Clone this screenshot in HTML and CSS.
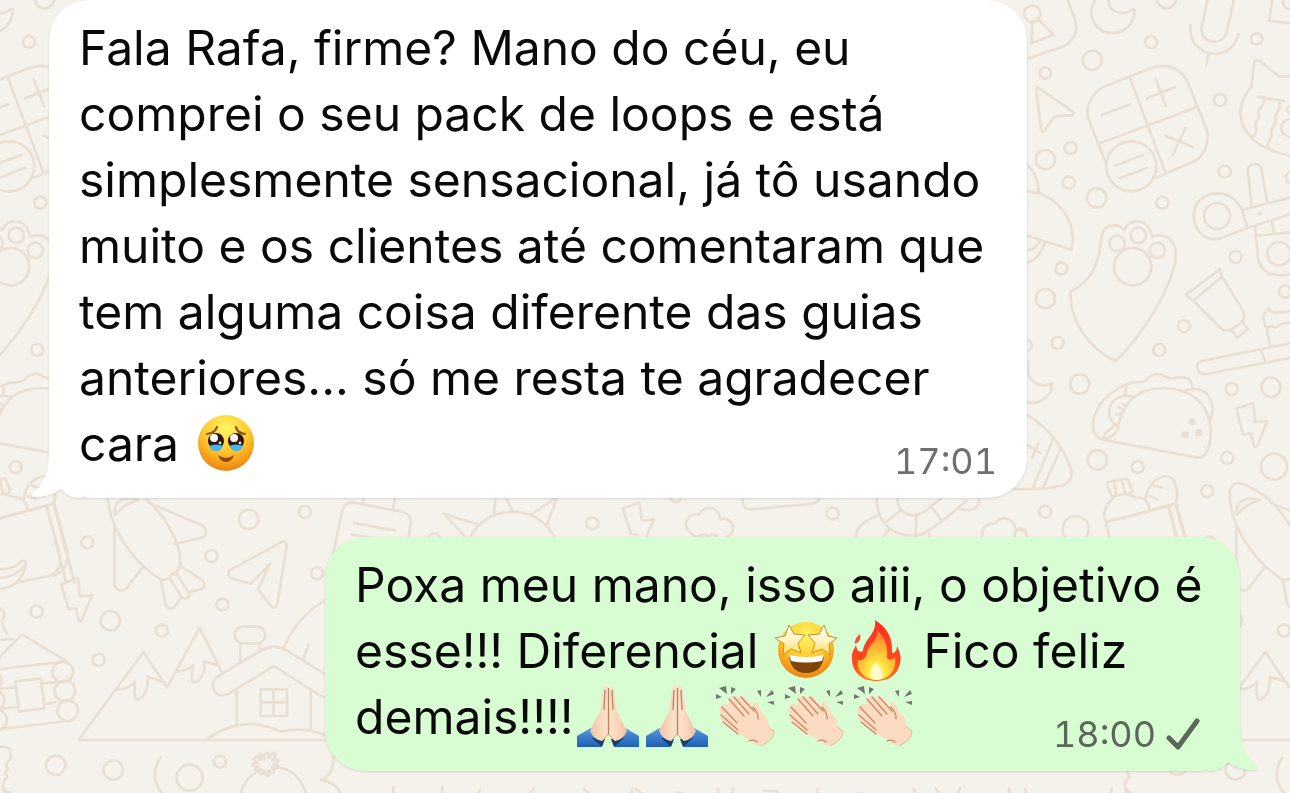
FILE: index.html
```html
<!DOCTYPE html>
<html lang="pt-BR">
<head>
    <meta charset="UTF-8">
    <meta name="viewport" content="width=device-width, initial-scale=1.0">
    <title>Conversa</title>
    <link rel="stylesheet" href="styles.css">
</head>
<body>

<!-- wallpaper doodles, the tile repeats every 1122px -->
<svg class="wallpaper" aria-hidden="true">
    <defs>
        <g id="tile">
            <g transform="translate(1020 0) scale(.33333)">
                <circle cx="37" cy="41" r="25"/>
                <path d="M38 65L34 130L101 104L53 56M143 0L166 60Q178 112 134 138L10 180"/>
                <path d="M225 0C195 50 230 99 277 99C315 99 344 70 344 30Q344 25 335 30C305 50 262 35 266 0"/>
                <circle cx="440" cy="-4" r="29"/><circle cx="393" cy="126" r="18"/><circle cx="217" cy="181" r="29"/><circle cx="76" cy="219" r="17"/>
                <path d="M562 0L545 83C540 135 610 140 620 95L639 15V0M511 75C503 175 635 195 655 102M566 163L559 194"/>
                <circle cx="710" cy="117" r="17"/><circle cx="600" cy="300" r="18"/>
                <path d="M757 0L747 62L830 73M790 0Q790 30 810 25"/>
                <path d="M49 268Q49 260 58 265L162 338Q162 346 150 346L103 350L73 393Q64 400 63 388Z"/>
                <path d="M258 491L207 360C193 320 218 276 252 260L388 206C440 185 485 205 504 250L557 380C575 430 550 475 510 490L400 536M330 234L437 520M240 430L530 322M246 345L330 313M381 295L465 262M407 237L438 319M437 407L519 442M496 384L459 465"/>
                <circle cx="334" cy="499" r="75"/><path d="M285 497L369 465M299 535L382 503"/>
                <path d="M695 260L702 190Q706 176 720 183L778 230H850M695 260C650 310 650 365 695 415Q740 458 830 470M713 290L792 303M730 297C740 320 705 325 716 345C723 360 700 365 708 380C714 398 697 410 697 410M778 307C788 330 757 340 767 360C772 378 748 380 755 400C760 415 736 425 745 443"/>
                <circle cx="810" cy="384" r="26"/><circle cx="816" cy="330" r="14"/>
                <circle cx="76" cy="479" r="29"/><circle cx="152" cy="444" r="18"/><circle cx="146" cy="548" r="18"/><circle cx="230" cy="594" r="29"/><circle cx="427" cy="608" r="18"/><circle cx="614" cy="515" r="18"/><circle cx="124" cy="806" r="18"/><circle cx="647" cy="771" r="18"/><circle cx="816" cy="533" r="18"/>
                <path d="M0 480Q55 510 56 576M0 574C95 565 178 655 154 749L0 700M0 750Q40 760 62 720M0 795Q60 785 74 725"/>
                <circle cx="591" cy="648" r="39"/><path d="M682 684L610 712C560 732 521 690 521 648C521 600 560 580 592 580C625 580 652 600 666 630L682 684M666 630L830 588M682 684L830 637M695 617L684 515C682 485 720 485 724 508L742 605M705 680L714 770Q720 805 750 825M755 660L762 696M706 708L830 695"/>
                <circle cx="719" cy="641" r="2"/><circle cx="777" cy="761" r="35"/>
                <path d="M220 810C250 750 237 720 250 695C260 671 300 670 313 691C325 655 385 648 396 710C445 695 475 730 466 785C450 860 390 980 287 1084C200 1040 150 960 151 876C190 855 210 830 220 810"/>
                <circle cx="291" cy="730" r="23"/><circle cx="355" cy="706" r="23"/><circle cx="412" cy="751" r="23"/><circle cx="338" cy="800" r="56"/>
            </g>
            <g transform="translate(1020 260) scale(.33333)">
                <circle cx="76" cy="116" r="29"/><circle cx="113" cy="249" r="18"/><circle cx="18" cy="256" r="17"/><circle cx="179" cy="372" r="29"/><circle cx="418" cy="270" r="18"/><circle cx="492" cy="198" r="18"/>
                <circle cx="635" cy="387" r="18"/><circle cx="753" cy="382" r="29"/><circle cx="795" cy="95" r="18"/><circle cx="622" cy="594" r="18"/><circle cx="762" cy="620" r="39"/><circle cx="562" cy="693" r="18"/><circle cx="353" cy="621" r="18"/><circle cx="232" cy="600" r="29"/><circle cx="76" cy="755" r="18"/><circle cx="167" cy="807" r="39"/><circle cx="2" cy="824" r="18"/>
                <path d="M714 0C725 45 780 55 820 38"/>
                <path d="M498 104L599 28L606 50L519 122ZM606 50L668 150Q677 168 668 185L633 210Q613 215 602 204L519 122M633 210L652 233L684 207L665 185"/>
                <path d="M750 258L740 204C725 180 730 158 747 144Q750 160 770 158L820 152M740 204Q752 195 765 203L785 192L820 186M820 248L545 303C522 310 528 345 560 342L820 292M723 270L734 300"/>
                <path d="M26 302C10 350 50 390 96 370C98 410 55 435 20 427"/>
                <path d="M0 454C60 480 130 550 154 630Q160 670 120 678Q65 690 -20 687M100 535L39 683M122 567L70 681M15 550L62 580M55 550L37 592"/>
                <path d="M247 539C210 525 215 480 230 453C250 410 290 385 330 370C350 365 365 370 380 360C390 343 420 335 436 350C455 360 458 355 470 353C510 345 515 365 519 387C570 385 590 440 569 485C575 520 572 550 562 572Q550 598 530 592L247 539Q277 535 292 510C305 430 350 385 430 384C510 384 560 430 569 485M493 392L519 387M319 378L315 405M344 411C310 400 275 410 268 450Q265 480 287 494L254 521L249 538M287 494L297 501M295 441L303 446M308 431L318 438M289 462L305 464"/>
                <g fill="#eadfd3"><circle cx="516" cy="485" r="7"/><circle cx="536" cy="518" r="7"/><circle cx="496" cy="524" r="7"/></g>
                <path d="M649 446L699 429L706 486L742 483L713 555Q706 566 702 556L692 520L670 525Z"/>
                <path d="M275 709L262 676Q260 664 275 664L322 656L337 690Q335 700 321 702L275 709M283 664L288 705M306 660L315 701M283 711C245 745 250 770 258 786C272 850 300 1000 300 1000M321 702C340 714 370 710 378 722Q388 735 388 749M258 786L467 732M378 715C380 680 410 650 438 648C470 650 477 700 467 732L530 970M402 678L425 682M390 709L413 717M446 740L505 970"/>
            </g>
            <g transform="translate(0 490) scale(.33333)">
                <path d="M140 50L178 190Q190 245 145 258L55 277M163 40L202 185Q208 240 160 257M0 237Q35 240 60 218Q76 205 77 222C70 265 45 293 0 297M0 264Q45 262 70 230M0 86L163 40"/>
                <circle cx="262" cy="157" r="18"/><circle cx="110" cy="365" r="18"/><circle cx="331" cy="392" r="29"/><circle cx="486" cy="422" r="18"/><circle cx="296" cy="510" r="18"/><circle cx="634" cy="198" r="18"/><circle cx="667" cy="344" r="18"/><circle cx="746" cy="88" r="29"/><circle cx="914" cy="66" r="18"/><circle cx="951" cy="250" r="18"/>
                <circle cx="167" cy="826" r="29"/><circle cx="340" cy="840" r="29"/><circle cx="569" cy="863" r="39"/><circle cx="660" cy="815" r="18"/>
                <path d="M183 282L234 264L240 319L277 316L244 392Q240 400 236 392L228 355L206 357Z"/>
                <path d="M483 270C390 210 320 100 323 5C330 -35 365 -20 400 0C480 45 550 160 540 230L525 255M483 270L510 266M345 75C340 40 360 15 415 30C390 38 370 45 345 75M343 103V285Q355 310 378 297L427 233M445 38L605 105C625 120 620 140 602 144L525 162M483 270L495 340Q505 365 523 350L545 323M543 230L600 265C620 280 615 293 602 298L568 305M510 266L544 320Q560 333 570 315L530 250Q510 247 510 266"/>
                <path d="M690 240L843 157Q860 150 860 168L832 342Q824 360 812 348L774 298L810 222L752 281L690 263Q680 252 690 240Z"/>
                <path d="M0 500L66 433L200 514L0 537M0 450L38 447M0 355Q20 370 10 385Q0 395 20 430M0 597L45 592M130 580L166 577M0 656L54 651M135 642L168 637M0 717L205 693M45 575L123 565L134 655L58 664Z"/>
                <circle cx="188" cy="545" r="31"/><circle cx="195" cy="603" r="31"/><circle cx="203" cy="662" r="31"/><circle cx="-26" cy="572" r="31"/><circle cx="-18" cy="631" r="31"/><circle cx="-10" cy="690" r="31"/>
                <path d="M236 750L430 486L501 592L599 413L667 550M350 598Q385 600 405 575C403 605 403 630 414 629C433 625 447 590 443 560L495 577M530 543Q560 545 580 525C573 565 574 580 585 578C605 570 617 540 613 514L650 525M236 750H1000"/>
                <rect x="704" y="410" width="92" height="50" rx="25"/><path d="M721 460V518M780 460V481M660 555L780 483Q822 459 860 481L1000 568M710 597V702M932 597V717M1000 624Q965 625 950 610L822 528L684 612C640 630 620 575 660 555M617 750C695 694 770 690 840 725Q920 708 985 740M852 472Q890 380 980 328M926 463L909 510"/>
                <path d="M782 598H861V678H782ZM821 598V678M782 637H861"/>
                <path d="M0 770Q33 770 31 785Q32 795 31 808Q10 820 24 835Q10 845 22 860Q5 875 10 900L30 909M482 802Q445 855 485 909M722 909Q735 865 765 850M835 832Q895 840 918 909M1000 800Q1000 860 963 869Q1010 880 1020 909"/>
                <path d="M792 808C786 784 771 790 781 809C764 793 753 807 773 819C751 818 753 834 774 829C758 841 768 852 782 836C777 858 788 858 793 840C798 866 809 864 806 840C820 858 829 848 816 833C840 839 842 825 820 823C842 815 836 801 817 811C835 790 822 777 808 804C805 783 793 783 792 808Z"/>
            </g>
            <g transform="translate(330 480) scale(.33333)">
                <path d="M10 220L37 90Q45 65 70 68L220 96Q244 105 243 130L233 180M98 70L102 45M190 90L196 45M72 129L195 152M65 163L180 185M405 170L341 101L448 135M422 170C470 75 615 65 673 170M492 105L497 45M550 95L520 40M602 105L682 50L650 137"/>
                <circle cx="787" cy="130" r="18"/><circle cx="313" cy="178" r="18"/><circle cx="1037" cy="48" r="18"/>
                <path d="M878 85L928 68L936 122L972 119L945 180M878 85L903 160L924 165M1095 168C1055 150 1060 100 1107 103C1120 75 1165 75 1171 117C1215 110 1220 165 1190 168M1100 170Q1120 160 1137 168Q1152 158 1163 170M1238 55Q1235 90 1265 88L1440 72Q1460 70 1468 55"/>
            </g>
            <g transform="translate(800 480) scale(.33333)">
                <circle cx="98" cy="100" r="18"/><circle cx="735" cy="95" r="18"/>
                <path d="M230 50C230 135 285 175 360 165Q400 150 500 62M292 50C290 110 350 120 385 85L430 50M260 125L304 90M350 106L346 168M240 103Q165 135 168 170M270 145L250 170M392 78L426 122M470 86L510 91Q545 80 535 50M388 160V175M546 170C545 130 575 130 586 130C600 105 645 112 646 149Q680 148 682 170"/>
            </g>
            <g transform="translate(320 750) scale(.6122)" stroke-width="4.2">
                <path d="M120 60Q120 100 125 135M200 60Q200 105 210 135M163 108L165 135M262 65L240 108H315M350 63Q320 95 305 135M430 63Q465 90 480 135M510 63Q500 105 520 114Q550 115 560 135M515 63L561 101Q575 95 577 75Q585 65 597 75M650 63L651 100Q660 115 670 95L675 63M725 67H747L745 135M731 75C700 75 700 105 732 105V135M813 63L814 82Q775 82 783 120L781 135M836 135C840 50 920 50 923 135M850 135C855 75 905 75 910 135M970 63L975 82Q950 96 968 105L978 135M1005 63L1031 92L1045 63M1125 63L1135 125L1147 115L1150 135M1152 63L1155 78L1172 76L1160 105L1172 110L1167 135M1198 135Q1200 105 1217 105Q1230 108 1235 122Q1245 110 1288 108L1293 63M1318 63L1316 85L1322 96L1315 116L1330 128"/>
                <ellipse cx="1090" cy="112" rx="9" ry="11"/><ellipse cx="605" cy="127" rx="6" ry="5"/>
            </g>
        </g>
    </defs>
    <use href="#tile"/>
    <use href="#tile" x="-1122"/>
    <use href="#tile" x="1122"/>
</svg>

<!-- emoji drawings -->
<svg class="sprites" aria-hidden="true">
    <defs>
        <radialGradient id="skinYellow" cx=".5" cy=".25" r=".75">
            <stop offset="0" stop-color="#fff766"/><stop offset=".55" stop-color="#ffc72e"/><stop offset="1" stop-color="#ec8210"/>
        </radialGradient>
        <linearGradient id="starFill" x1="0" y1="0" x2="0" y2="1">
            <stop offset="0" stop-color="#fff"/><stop offset=".5" stop-color="#fff7c8"/><stop offset="1" stop-color="#ffd84c"/>
        </linearGradient>
        <linearGradient id="flameFill" x1="0" y1="0" x2="0" y2="1">
            <stop offset="0" stop-color="#ff3024"/><stop offset=".7" stop-color="#ff4a1e"/><stop offset="1" stop-color="#ff7a1b"/>
        </linearGradient>
        <radialGradient id="flameCore" cx=".5" cy=".88" r=".8">
            <stop offset="0" stop-color="#fffbd8"/><stop offset=".3" stop-color="#ffe640"/><stop offset=".8" stop-color="#ffa02d"/><stop offset="1" stop-color="#ff7b35"/>
        </radialGradient>
        <linearGradient id="sleeve" x1="0" y1="0" x2="0" y2="1">
            <stop offset="0" stop-color="#5599dd"/><stop offset="1" stop-color="#1f5fb4"/>
        </linearGradient>
        <linearGradient id="skin" x1="0" y1="0" x2="1" y2="0">
            <stop offset="0" stop-color="#f0c3a2"/><stop offset=".4" stop-color="#fde0c8"/><stop offset=".6" stop-color="#fde0c8"/><stop offset="1" stop-color="#f0c3a2"/>
        </linearGradient>
        <symbol id="tearful" viewBox="0 0 69 62">
            <circle cx="34" cy="31" r="28" fill="url(#skinYellow)"/>
            <path d="M15 22Q23 21 25 15M53 22Q45 21 44 15" fill="none" stroke="#89530f" stroke-width="2.2" stroke-linecap="round"/>
            <circle cx="24" cy="29" r="8" fill="#2b1710"/><circle cx="44" cy="29" r="8" fill="#2b1710"/>
            <path d="M17 34Q24 31 31 34Q28 40 24 39Q19 39 17 34ZM37 34Q44 31 51 34Q49 39 44 39Q40 39 37 34Z" fill="#43b8ee"/>
            <circle cx="22" cy="26" r="4" fill="#fff"/><circle cx="42" cy="26" r="4" fill="#fff"/><circle cx="28" cy="31" r="1.4" fill="#ddd"/><circle cx="48" cy="31" r="1.4" fill="#ddd"/>
            <path d="M26 43Q34 49 42 43Q40 50 34 50Q28 50 26 43Z" fill="#8b4a0b"/>
        </symbol>
        <symbol id="starstruck" viewBox="0 0 69 62">
            <circle cx="34" cy="31" r="28" fill="url(#skinYellow)"/>
            <path d="M17 37Q34 41 52 37Q50 54 34 54Q19 54 17 37Z" fill="#7c4509"/>
            <path d="M17 36Q34 40 52 36L50 42Q34 45 19 42Z" fill="#fff"/>
            <g fill="url(#starFill)" stroke="#c69122" stroke-width="1" stroke-linejoin="round">
                <path d="M17 6L22 15L33 16L26 24L29 34L19 30L11 36L12 25L3 19L13 17Z"/>
                <path d="M52 6L47 15L36 16L43 24L40 34L50 30L58 36L57 25L65 19L56 17Z"/>
            </g>
        </symbol>
        <symbol id="flame" viewBox="0 0 69 62">
            <path d="M34 1C47 9 52 20 51 34C55 34 56 30 56 27C61 37 60 42 58 48C54 58 46 62 35 62C21 62 11 53 11 40C10 33 14 29 15 26C16 32 18 34 22 32C23 20 36 15 34 1Z" fill="url(#flameFill)"/>
            <path d="M19 15Q21 22 14 25Q13 20 19 15Z" fill="#ff4b32"/>
            <path d="M36 11C45 20 47 28 46 39C50 42 52 40 54 38C56 49 50 60 36 61C23 61 15 51 17 41C21 42 25 40 26 34C27 25 37 24 36 11Z" fill="url(#flameCore)"/>
            <path d="M35 43C44 52 43 61 36 61C28 61 27 52 35 43Z" fill="#fffbd2" opacity=".8"/>
        </symbol>
        <symbol id="pray" viewBox="0 0 69 62">
            <path d="M3 51L17 43L30 55L27 62H3ZM65 51L51 43L38 55L41 62H65Z" fill="url(#sleeve)"/>
            <path d="M18 53L28 62L31 54M50 53L40 62L37 54" fill="#163c70"/>
            <path d="M34 2Q31 -1 29 4L26 27Q20 37 16 46Q20 55 28 56L34 49L41 56Q49 55 53 46Q48 37 43 27L40 4Q38 -1 34 2Z" fill="url(#skin)"/>
            <path d="M34.500 3V49M31 5L30 25M38 5L39 25" fill="none" stroke="#b9835e" stroke-width="1.300"/>
            <path d="M28 56L34 49L41 56" fill="none" stroke="#d9a17b"/>
        </symbol>
        <symbol id="clap" viewBox="0 0 69 62">
            <g fill="#737671"><path d="M7 3L14 1L15 9ZM19 2L24 4L19 9ZM4 9L10 12L4 14ZM45 6L49 5L49 12ZM54 12L60 5L62 9ZM55 17L62 16V20Z"/></g>
            <path d="M9 21Q12 17 16 20L18 13Q22 9 26 13Q29 9 33 13L41 22Q40 14 45 18Q47 22 50 28C55 33 57 36 56 41L62 46Q62 55 49 61Q42 60 39 56L25 48Q17 44 12 37Q7 34 9 30Q6 26 9 21Z" fill="#fbdcc3"/>
            <path d="M17 14L32 31M22 12L37 29M29 12L42 26M10 22L25 38M9 30L26 45M11 37L26 49M41 22Q47 29 46 34M37 56Q42 54 45 57" fill="none" stroke="#c98a66" stroke-width="1.300" stroke-linecap="round"/>
            <path d="M56 41Q58 44 62 46Q62 55 49 61" fill="none" stroke="#e8b797"/>
        </symbol>
    </defs>
</svg>

<main class="chat">
    <article class="message received">
        <svg class="tail" viewBox="0 0 50 54" aria-hidden="true"><path d="M18 0C18 25 16 36 2 49Q-1 53 4 53Q20 53 30 45Q37 54 50 54V0Z"/></svg>
        <div class="text">Fala Rafa, firme? Mano do céu, eu comprei o seu pack de loops e está simplesmente sensacional, já tô usando muito e os clientes até comentaram que tem alguma coisa diferente das guias anteriores... só me resta te agradecer cara <svg class="emoji" role="img" aria-label="Rosto segurando as lágrimas"><use href="#tearful"/></svg>
            <div class="meta"><time datetime="17:01">17:01</time></div>
        </div>
    </article>

    <article class="message sent">
        <svg class="tail" viewBox="0 0 50 54" aria-hidden="true"><path d="M18 0C18 25 16 36 2 49Q-1 53 4 53Q20 53 30 45Q37 54 50 54V0Z"/></svg>
        <div class="text">Poxa meu mano, isso aiii, o objetivo é esse!!! Diferencial <svg class="emoji" role="img" aria-label="Rosto com olhos de estrela"><use href="#starstruck"/></svg><svg class="emoji" role="img" aria-label="Fogo"><use href="#flame"/></svg> Fico feliz demais!!!!<svg class="emoji" role="img" aria-label="Mãos juntas"><use href="#pray"/></svg><svg class="emoji" role="img" aria-label="Mãos juntas"><use href="#pray"/></svg><svg class="emoji" role="img" aria-label="Palmas"><use href="#clap"/></svg><svg class="emoji" role="img" aria-label="Palmas"><use href="#clap"/></svg><svg class="emoji" role="img" aria-label="Palmas"><use href="#clap"/></svg>
            <div class="meta">
                <time datetime="18:00">18:00</time>
                <svg class="check" viewBox="0 0 34 32" role="img" aria-label="Enviada"><path d="M3 20L12 29L31 3"/></svg>
            </div>
        </div>
    </article>
</main>

</body>
</html>
```
FILE: styles.css
```css
* {
    box-sizing: border-box;
}
body {
    font-family: Inter, "Liberation Sans", sans-serif;
    background-color: #f5f2eb;
    color: #0a0a0a;
    margin: 0;
    min-height: 100vh;
    position: relative;
    overflow-x: hidden;
}
.wallpaper {
    position: absolute;
    top: 0;
    left: 0;
    width: 100%;
    height: 100%;
    fill: none;
    stroke: #eadfd3;
    stroke-width: 8px;
    stroke-linecap: round;
    stroke-linejoin: round;
}
.sprites {
    position: absolute;
    width: 0;
    height: 0;
}
.chat {
    position: relative;
    display: flex;
    flex-direction: column;
    gap: 39px;
    padding: 0 50px 22px 49px;
}
.message {
    position: relative;
    padding: 15px 30px 21px;
    border-radius: 40px;
    filter: drop-shadow(0 1px 1px rgba(0, 0, 0, 0.12));
}
.received {
    align-self: flex-start;
    max-width: 978px;
    background: #fff;
    fill: #fff;
}
.sent {
    align-self: flex-end;
    max-width: 915px;
    background: #d8fdd2;
    fill: #d8fdd2;
}
.tail {
    position: absolute;
    bottom: 0;
    left: -18px;
    width: 50px;
    height: 54px;
}
.sent .tail {
    left: auto;
    right: -18px;
    transform: scaleX(-1);
}
.text {
    display: flow-root;
    font-size: 48px;
    line-height: 66px;
}
.emoji {
    width: 69px;
    height: 62px;
    vertical-align: -13px;
}
.meta {
    float: right;
    display: flex;
    align-items: center;
    gap: 10px;
    margin-top: 34px;
    font-size: 36px;
    font-variant-numeric: tabular-nums;
    line-height: 32px;
    color: #6f6f6f;
}
.sent .meta {
    color: #596858;
    padding-right: 10px;
}
.check {
    width: 34px;
    height: 32px;
    fill: none;
    stroke: #596858;
    stroke-width: 5px;
    stroke-linecap: round;
    stroke-linejoin: round;
}
```
